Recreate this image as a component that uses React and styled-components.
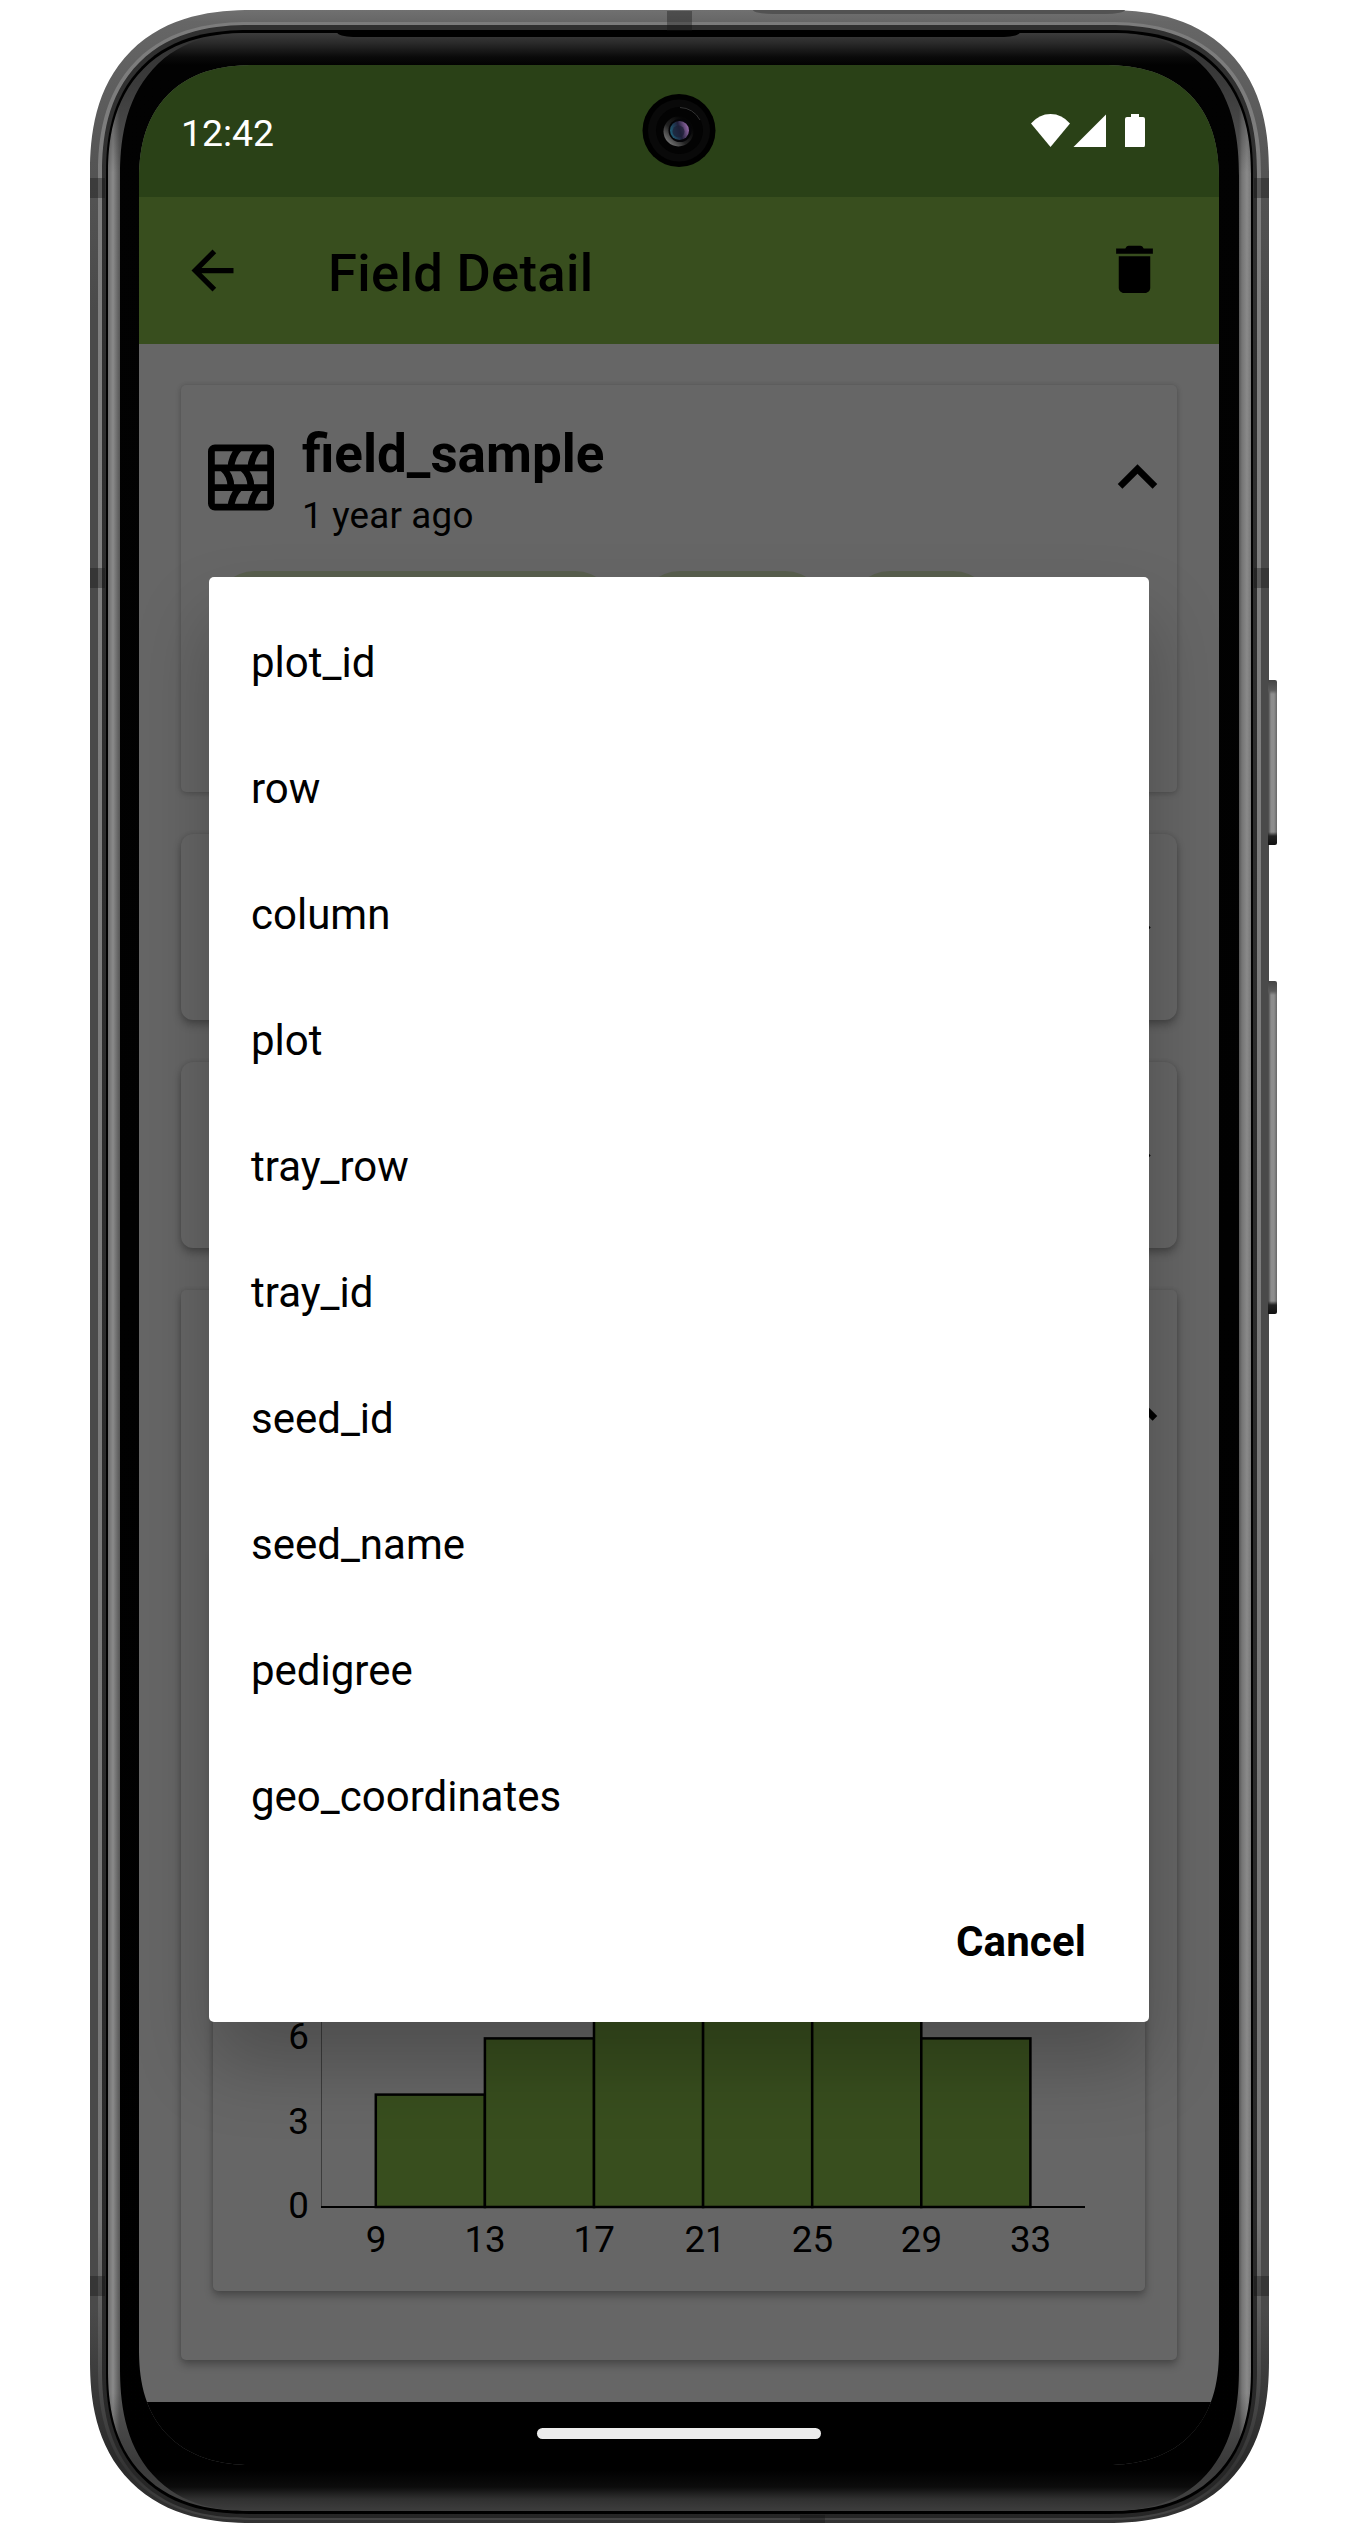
import React from "react";
import styled, { createGlobalStyle } from "styled-components";

const Global = createGlobalStyle`
  *, *::before, *::after { box-sizing: border-box; }
  html, body { margin: 0; background: #fff; }
  body { font-family: Roboto, "Liberation Sans", sans-serif; color: #000; }
`;

/* ---------- phone body ---------- */

const Stage = styled.div`
  width: 1367px;
  height: 2533px;
  padding: 10px 0 0 90px;
  overflow: hidden;
`;

const Phone = styled.div`
  position: relative;
  width: 1179px;
  height: 2513px;
`;

const Shell = styled.div`
  width: 100%;
  height: 100%;
  padding: ${(p) => p.$pad};
  background: ${(p) => p.$fill};
  border-radius: ${(p) => p.$plain};
  @supports (corner-shape: superellipse(1.25)) {
    border-radius: ${(p) => p.$smooth};
    corner-shape: superellipse(1.25);
  }
`;

const SideButton = styled.div`
  position: absolute;
  left: 1178px;
  top: ${(p) => p.$top}px;
  width: 9px;
  height: ${(p) => p.$height}px;
  border-radius: 0 2px 2px 0;
  background: linear-gradient(180deg, #444 0, #5a5a5a 10px, transparent 14px, transparent calc(100% - 13px), #222 calc(100% - 9px), #111 100%),
    linear-gradient(90deg, #444 0, #8c8c8c 3px, #8e8e8e 6px, #666 100%);
`;

const Antenna = styled.div`
  position: absolute;
  left: ${(p) => p.$x}px;
  top: ${(p) => p.$y}px;
  width: ${(p) => p.$w}px;
  height: ${(p) => p.$h}px;
  background: rgba(20, 20, 20, 0.36);
`;

const TopSeam = styled.div`
  position: absolute;
  left: 663px;
  top: 0;
  width: 372px;
  height: 4px;
  background: #525252;
  border-radius: 0 0 20px 20px / 0 0 4px 4px;
`;

const Earpiece = styled.div`
  position: absolute;
  left: 247px;
  top: 22px;
  width: 683px;
  height: 5px;
  background: #000;
  border-radius: 0 0 16px 16px / 0 0 5px 5px;
`;

/* ---------- screen ---------- */

const Screen = styled.div`
  position: relative;
  display: flex;
  flex-direction: column;
  width: 1080px;
  height: 2400px;
  overflow: hidden;
  background: #666;
  border-radius: 104px;
  @supports (corner-shape: superellipse(1.25)) {
    border-radius: 116px;
    corner-shape: superellipse(1.25);
  }
`;

const StatusBar = styled.div`
  flex: none;
  display: flex;
  justify-content: space-between;
  align-items: center;
  height: 132px;
  padding: 3px 74px 0 42px;
  background: #2a4117;
  color: #fff;
  font-size: 37.4px;
`;

const StatusIcons = styled.svg`
  width: 114px;
  height: 33px;
  margin-top: -5px;
`;

const Camera = styled.svg`
  position: absolute;
  left: 503px;
  top: 28px;
  width: 74px;
  height: 74px;
`;

const Toolbar = styled.div`
  flex: none;
  display: flex;
  align-items: center;
  height: 147px;
  padding: 0 53px 0 42px;
  background: #384e1e;
`;

const Title = styled.h1`
  flex: 1;
  margin: 4px 0 0 84px;
  font-size: 52.5px;
  font-weight: 500;
  letter-spacing: 0.34px;
`;

const Glyph = styled.svg`
  flex: none;
  display: block;
  width: ${(p) => p.$size}px;
  height: ${(p) => p.$size}px;
  fill: #000;
`;

const Content = styled.main`
  flex: none;
  display: flex;
  flex-direction: column;
  gap: 42px;
  height: 2058px;
  padding: 41px 42px 42px;
`;

const Card = styled.section`
  flex: none;
  display: flex;
  flex-direction: column;
  height: ${(p) => p.$height}px;
  padding: ${(p) => p.$pad || "0"};
  border-radius: ${(p) => p.$radius || 5}px;
  background: #666;
  box-shadow: 0 ${(p) => p.$lift || 2}px ${(p) => (p.$lift || 2) + 4}px rgba(0, 0, 0, ${(p) => (p.$lift ? 0.28 : 0.16)}), 0 0 4px rgba(0, 0, 0, 0.12);
`;

const CardHeader = styled.div`
  display: flex;
  align-items: center;
  height: ${(p) => p.$height || 119}px;
  justify-content: flex-end;
`;

const Heading = styled.div`
  flex: 1;
  padding-top: 6px;
  margin-left: 17px;
`;

const FieldName = styled.div`
  font-size: 53px;
  font-weight: 700;
  line-height: 60px;
`;

const Imported = styled.div`
  margin-top: 10px;
  font-size: 36.75px;
  line-height: 44px;
  letter-spacing: 0.2px;
`;

const Chips = styled.div`
  display: flex;
  gap: 21px;
  margin: 34px 0 0 16px;
`;

const Chip = styled.div`
  width: ${(p) => p.$width}px;
  height: 84px;
  border-radius: 42px;
  background: #595f4e;
`;

const ChartCardSlot = styled.div`
  padding: 0 32px;
`;

const ChartCard = styled(Card)`
  margin-top: 81px;
`;

const Chart = styled.svg`
  display: block;
  width: 932px;
  height: 700px;
  font-size: 36.75px;
`;

const NavBar = styled.div`
  flex: none;
  display: flex;
  align-items: center;
  justify-content: center;
  height: 63px;
  background: #000;
`;

const HomePill = styled.div`
  width: 284px;
  height: 11px;
  border-radius: 6px;
  background: #ececec;
`;

/* ---------- dialog ---------- */

const Dialog = styled.div`
  position: absolute;
  left: 70px;
  top: 512px;
  display: flex;
  flex-direction: column;
  width: 940px;
  height: 1445px;
  padding-top: 23px;
  background: #fff;
  border-radius: 5px;
  box-shadow: 0 42px 75px rgba(0, 0, 0, 0.24);
`;

const Options = styled.ul`
  margin: 0;
  padding: 0;
  list-style: none;
`;

const Option = styled.li`
  padding: 0 42px;
  font-size: 42px;
  line-height: 126px;
`;

const Actions = styled.div`
  display: flex;
  justify-content: flex-end;
  padding: 19px 63px 0 0;
`;

const Cancel = styled.button`
  border: 0;
  padding: 0;
  background: none;
  font: 700 42px/126px Roboto, sans-serif;
  letter-spacing: 0.15px;
  color: #000;
`;

const options = [
  "plot_id", "row", "column", "plot", "tray_row",
  "tray_id", "seed_id", "seed_name", "pedigree", "geo_coordinates",
];

const bins = [4, 6, 12, 14, 11, 6];
const ticks = [9, 13, 17, 21, 25, 29, 33];
const BASE = 616;
const UNIT = 28.1;
const binX = (i) => 162.8 + i * 109.1;

const ArrowBack = () => (
  <Glyph $size={63} viewBox="0 0 24 24">
    <path d="M20 11H7.83l5.59-5.59L12 4l-8 8 8 8 1.41-1.41L7.83 13H20v-2z" />
  </Glyph>
);

const Trash = () => (
  <Glyph $size={63} viewBox="0 0.4 24 24">
    <path d="M6 19c0 1.1.9 2 2 2h8c1.1 0 2-.9 2-2V7H6v12zM19 4h-3.5l-.5-.7q-.3-.3-.8-.3H9.8q-.5 0-.8.3L8.5 4H5v2h14V4z" />
  </Glyph>
);

const ChevronUp = () => (
  <Glyph $size={79} viewBox="0 0 24 24">
    <path d="M7.41 15.41L12 10.83l4.59 4.58L18 14l-6-6-6 6z" />
  </Glyph>
);

const ChevronRight = () => (
  <Glyph $size={79} viewBox="0 0 24 24">
    <path d="M10 6L8.59 7.41 13.17 12l-4.58 4.59L10 18l6-6z" />
  </Glyph>
);

const FieldIcon = () => (
  <Glyph $size={88} viewBox="-11 -10.5 88 88">
    <g fill="none" stroke="#000" strokeWidth="6.8">
      <rect x="3.4" y="3.4" width="59.2" height="59.2" rx="3.5" />
      <path d="M3 23.4H63M3 43.2H63" />
      <path d="M23 23Q23.5 12 31 4M43 23Q43.5 12 51 4" />
      <path d="M15 24Q23 31 23 43M35 24Q43 31 43 43" />
      <path d="M23 63Q23.5 52 31 44M43 63Q43.5 52 51 44" />
    </g>
  </Glyph>
);

function Histogram() {
  return (
    <Chart viewBox="0 0 932 700">
      <path d={`M108.5 40V${BASE}`} stroke="#3c3c3c" strokeWidth="1" />
      {bins.map((n, i) => (
        <rect key={i} x={binX(i)} y={BASE - n * UNIT} width="109.1" height={n * UNIT} fill="#384e1e" stroke="#000" strokeWidth="2.5" />
      ))}
      <path d={`M108 ${BASE}H872`} stroke="#000" strokeWidth="2.2" />
      {[0, 3, 6].map((v) => (
        <text key={v} x="96" y={BASE + 11 - v * UNIT} textAnchor="end">{v}</text>
      ))}
      {ticks.map((t, i) => (
        <text key={t} x={binX(i) + (t === 21 ? 2 : 0.2)} y="661" textAnchor="middle">{t}</text>
      ))}
    </Chart>
  );
}

function CameraHole() {
  return (
    <Camera viewBox="0 0 74 74">
      <defs>
        <linearGradient id="ring" x1="0.1" y1="0.85" x2="0.75" y2="0.2">
          <stop offset="0" stopColor="#777" />
          <stop offset="0.45" stopColor="#222" />
          <stop offset="1" stopColor="#050505" />
        </linearGradient>
        <linearGradient id="lens" x1="0" y1="0.6" x2="1" y2="0.3">
          <stop offset="0" stopColor="#1f6078" />
          <stop offset="0.5" stopColor="#20203a" />
          <stop offset="1" stopColor="#a070b0" />
        </linearGradient>
      </defs>
      <circle cx="37" cy="37.5" r="36.5" fill="#000" />
      <circle cx="37" cy="37.5" r="31" fill="#090909" />
      <circle cx="37.5" cy="37.5" r="23.5" fill="#030303" />
      <path d="M38 14.5A23 23 0 0 1 58 27" fill="none" stroke="#333" strokeWidth="1" />
      <circle cx="36.5" cy="38.5" r="15" fill="url(#ring)" />
      <circle cx="38" cy="37.5" r="11.5" fill="#050508" />
      <circle cx="37.5" cy="37.5" r="9.5" fill="url(#lens)" />
      <circle cx="36.5" cy="38.5" r="6" fill="#1c2036" opacity="0.7" />
    </Camera>
  );
}

function AppScreen() {
  return (
    <Screen>
      <StatusBar>
        <span>12:42</span>
        <StatusIcons viewBox="0 0 114 33" fill="#fff">
          <path d="M0 9.5Q8 0 19.5 0T39 9.5L19.5 33Z" />
          <path d="M42.5 33L75 .5V33Z" />
          <path d="M94 5q0-2 2-2h4V0h8v3h4q2 0 2 2V31q0 2-1 2H94Z" />
        </StatusIcons>
      </StatusBar>
      <CameraHole />
      <Toolbar>
        <ArrowBack />
        <Title>Field Detail</Title>
        <Trash />
      </Toolbar>
      <Content>
        <Card $height={407} $pad="33px 0 0 16px">
          <CardHeader>
            <FieldIcon />
            <Heading>
              <FieldName>field_sample</FieldName>
              <Imported>1 year ago</Imported>
            </Heading>
            <ChevronUp />
          </CardHeader>
          <Chips>
            <Chip $width={404} />
            <Chip $width={189} />
            <Chip $width={147} />
          </Chips>
        </Card>
        <Card $height={186} $radius={12} $lift={5}>
          <CardHeader $height={186}><ChevronRight /></CardHeader>
        </Card>
        <Card $height={186} $radius={12} $lift={5}>
          <CardHeader $height={186}><ChevronRight /></CardHeader>
        </Card>
        <Card $height={1070} $lift={5} $pad="60px 0 0">
          <CardHeader><ChevronUp /></CardHeader>
          <ChartCardSlot>
            <ChartCard $height={741} $lift={5} $pad="41px 0 0"><Histogram /></ChartCard>
          </ChartCardSlot>
        </Card>
      </Content>
      <NavBar><HomePill /></NavBar>
      <Dialog role="dialog">
        <Options>
          {options.map((o) => <Option key={o}>{o}</Option>)}
        </Options>
        <Actions><Cancel>Cancel</Cancel></Actions>
      </Dialog>
    </Screen>
  );
}

export default function App() {
  return (
    <>
      <Global />
      <Stage>
        <Phone>
          <SideButton $top={670} $height={165} />
          <SideButton $top={971} $height={333} />
          <Shell
            $pad="12px 8px 3px"
            $plain="146px"
            $smooth="162px"
            $fill="linear-gradient(180deg, #707070 0, #666 12px, #555 150px, #4a4a4a 300px, #4a4a4a 2300px, #2a2a2a 2450px, #333 100%)"
          >
            <Shell
              $pad="3px 4px 2px"
              $plain="137px"
              $smooth="152px"
              $fill="linear-gradient(180deg, #7c7c7c, #808080 400px, #777 2200px, #333 2450px, #444)"
            >
              <Shell
                $pad="5px 4px 4px"
                $plain="133px"
                $smooth="148px"
                $fill="linear-gradient(180deg, #303030 0, #2a2a2a 2300px, #262626)"
              >
                <Shell $pad="3px 2px" $plain="129px" $smooth="143px" $fill="#000">
                  <Shell
                    $pad="0 12px"
                    $plain="127px"
                    $smooth="141px"
                    $fill="linear-gradient(180deg, #333 0, rgba(40,40,40,0.6) 50px, transparent 140px, transparent 2360px, rgba(40,40,40,.6) 2430px, #444 100%), linear-gradient(90deg, #6c6c6c 0, #8a8a8a 5px, #555 12px, #555 1131px, #757575 1134px, #8a8a8a 1139px, #777 100%)"
                  >
                    <Shell
                      $pad="32px 19px 0"
                      $plain="120px / 130px"
                      $smooth="130px / 143px"
                      $fill="linear-gradient(180deg, #3c3c3c 0, #2a2a2a 10px, #0a0a0a 24px, #020202 32px, #000 calc(100% - 42px), #0c0c0c calc(100% - 24px), #303030 calc(100% - 12px), #3e3e3e 100%)"
                    >
                      <AppScreen />
                    </Shell>
                  </Shell>
                </Shell>
              </Shell>
            </Shell>
          </Shell>
          <TopSeam />
          <Earpiece />
          <Antenna $x={0} $y={168} $w={15} $h={20} />
          <Antenna $x={0} $y={558} $w={15} $h={20} />
          <Antenna $x={0} $y={2266} $w={15} $h={20} />
          <Antenna $x={1164} $y={168} $w={15} $h={20} />
          <Antenna $x={1164} $y={558} $w={15} $h={20} />
          <Antenna $x={1164} $y={2266} $w={15} $h={20} />
          <Antenna $x={577} $y={1} $w={25} $h={20} />
          <Antenna $x={710} $y={2505} $w={25} $h={8} />
        </Phone>
      </Stage>
    </>
  );
}
